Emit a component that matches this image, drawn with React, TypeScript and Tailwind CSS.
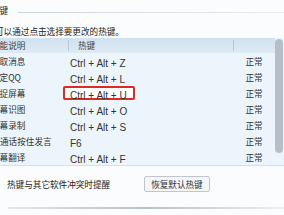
import React from 'react';

type HotkeyRow = {
  name: string;
  keys: string;
  status: string;
  editing?: boolean;
  indent?: boolean;
};

const ROWS: HotkeyRow[] = [
  { name: '提取消息', keys: 'Ctrl + Alt + Z', status: '正常' },
  { name: '锁定QQ', keys: 'Ctrl + Alt + L', status: '正常' },
  { name: '捕捉屏幕', keys: 'Ctrl + Alt + U', status: '正常', editing: true },
  { name: '屏幕识图', keys: 'Ctrl + Alt + O', status: '正常' },
  { name: '屏幕录制', keys: 'Ctrl + Alt + S', status: '正常' },
  { name: '通话按住发言', keys: 'F6', status: '正常', indent: true },
  { name: '屏幕翻译', keys: 'Ctrl + Alt + F', status: '正常' },
];

const cjk = "font-['Noto_Sans_CJK_SC',sans-serif] text-[8.6px]";
const latin = "font-['Liberation_Sans','Noto_Sans_CJK_SC',sans-serif] text-[10px]";

const App: React.FC = () => {
  return (
    <div className="w-[284px] h-[215px] overflow-hidden bg-[#fbfcfd] text-[#333] flex flex-col">
      {/* section title, cut at the left edge */}
      <div className="h-[20px] flex items-center -ml-[9px]">
        <span className={`${cjk} leading-none text-[#222]`}>热键</span>
        <div className="flex-1 h-px mt-[5px] ml-[10px] bg-gradient-to-r from-[#cbd3db] to-[#e9edf1]" />
      </div>

      <div className={`h-[14px] mt-[4px] flex items-center -ml-[5px] ${cjk} leading-none text-[#222]`}>
        可以通过点击选择要更改的热键。
      </div>

      {/* hotkey table + scrollbar */}
      <div className="h-[128px] flex bg-[#ecf5fb] border-b border-[#d6e0e8]">
        <div className="flex-1 flex flex-col">
          <div className="h-[15px] flex items-center bg-gradient-to-b from-[#d0e1ef] to-[#deebf5]">
            <div className={`w-[77px] -ml-[9px] ${cjk} leading-none text-[#444]`}>功能说明</div>
            <div className="h-[11px] w-px bg-[#b9c9d6]" />
            <div className={`w-[164px] pl-[9px] ${cjk} leading-none text-[#444]`}>热键</div>
            <div className="h-[11px] w-px bg-[#b9c9d6]" />
            <div className="flex-1" />
          </div>

          {ROWS.map((row) => (
            <div key={row.name} className="relative h-[16px] flex items-center">
              {row.editing && (
                <div className="absolute left-[63px] top-px w-[72px] h-[14px] border-2 border-[#dd2a24] rounded-[2px] bg-white" />
              )}
              <div className={`w-[77px] -ml-[9px] ${cjk} leading-none whitespace-nowrap ${row.indent ? 'pl-[9px]' : ''}`}>
                {row.name}
              </div>
              <div className="relative w-[165px] pl-[2px]">
                <span className={`${latin} leading-none text-[#333]`}>{row.keys}</span>
              </div>
              <div className={`flex-1 text-center ${cjk} leading-none text-[#333]`}>{row.status}</div>
            </div>
          ))}
        </div>

        <div className="w-[9px] shrink-0 pt-px pr-px">
          <div className="w-[8px] h-[114px] rounded-[4px] bg-[#b6bfc8]" />
        </div>
      </div>

      {/* footer */}
      <div className="h-[36px] flex items-center">
        <div className="w-[10px] h-[10px] -ml-[12px] border border-[#9aa4ad] bg-white rounded-[2px]" />
        <span className={`ml-[9px] ${cjk} leading-none text-[#222]`}>热键与其它软件冲突时提醒</span>
        <button
          className={`ml-[34px] h-[16px] px-[6px] border border-[#bfc6cd] rounded-[2px] bg-[#f4f6f8] ${cjk} leading-none text-[#333]`}
        >
          恢复默认热键
        </button>
      </div>

      <div className="h-[2px] mt-[5px] ml-[8px] bg-gradient-to-r from-[#e4e7ea] via-[#b9c0c7] to-[#eef0f2]" />
    </div>
  );
};

export default App;
